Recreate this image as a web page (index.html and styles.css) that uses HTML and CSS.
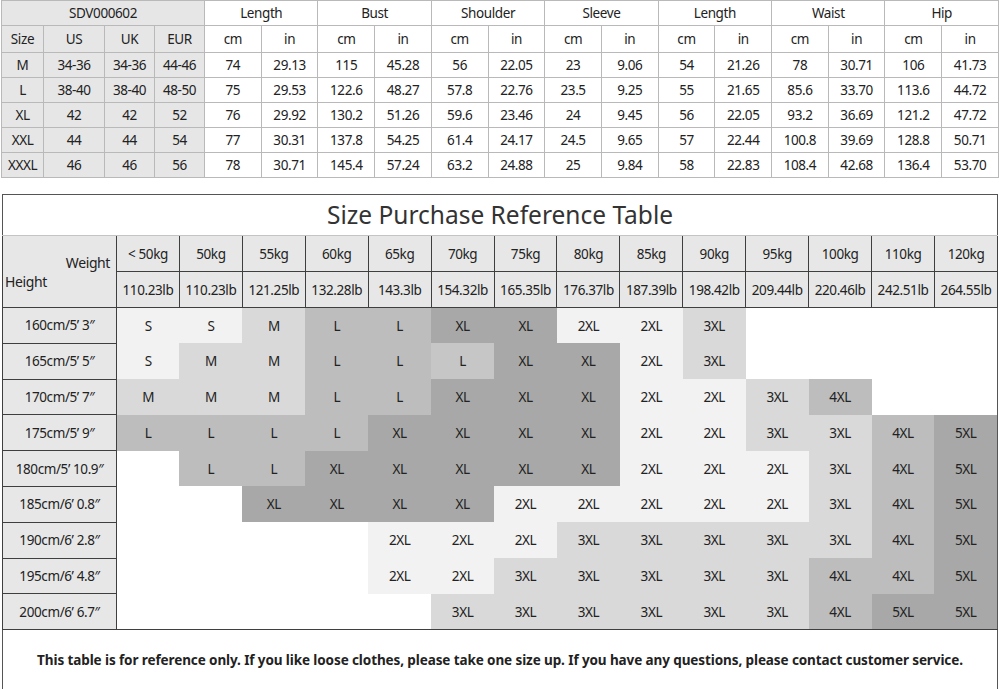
FILE: index.html
```html
<!DOCTYPE html>
<html lang="en">
<head>
<meta charset="utf-8">
<title>SDV000602 Size Chart</title>
<link rel="stylesheet" href="styles.css">
</head>
<body>
<div class="page">
  <table class="spec">
    <colgroup>
      <col class="c-size"><col class="c-us"><col class="c-uk"><col class="c-eur">
      <col><col><col><col><col><col><col><col><col><col><col><col><col><col>
    </colgroup>
    <tr class="r-top">
      <th colspan="4" class="g">SDV000602</th>
      <th colspan="2">Length</th><th colspan="2">Bust</th><th colspan="2">Shoulder</th><th colspan="2">Sleeve</th>
      <th colspan="2">Length</th><th colspan="2">Waist</th><th colspan="2">Hip</th>
    </tr>
    <tr class="r-sub">
      <th class="g">Size</th><th class="g">US</th><th class="g">UK</th><th class="g">EUR</th>
      <th>cm</th><th>in</th><th>cm</th><th>in</th><th>cm</th><th>in</th><th>cm</th><th>in</th>
      <th>cm</th><th>in</th><th>cm</th><th>in</th><th>cm</th><th>in</th>
    </tr>
    <tr><td class="g">M</td><td class="g">34-36</td><td class="g">34-36</td><td class="g">44-46</td><td>74</td><td>29.13</td><td>115</td><td>45.28</td><td>56</td><td>22.05</td><td>23</td><td>9.06</td><td>54</td><td>21.26</td><td>78</td><td>30.71</td><td>106</td><td>41.73</td></tr>
    <tr><td class="g">L</td><td class="g">38-40</td><td class="g">38-40</td><td class="g">48-50</td><td>75</td><td>29.53</td><td>122.6</td><td>48.27</td><td>57.8</td><td>22.76</td><td>23.5</td><td>9.25</td><td>55</td><td>21.65</td><td>85.6</td><td>33.70</td><td>113.6</td><td>44.72</td></tr>
    <tr><td class="g">XL</td><td class="g">42</td><td class="g">42</td><td class="g">52</td><td>76</td><td>29.92</td><td>130.2</td><td>51.26</td><td>59.6</td><td>23.46</td><td>24</td><td>9.45</td><td>56</td><td>22.05</td><td>93.2</td><td>36.69</td><td>121.2</td><td>47.72</td></tr>
    <tr><td class="g">XXL</td><td class="g">44</td><td class="g">44</td><td class="g">54</td><td>77</td><td>30.31</td><td>137.8</td><td>54.25</td><td>61.4</td><td>24.17</td><td>24.5</td><td>9.65</td><td>57</td><td>22.44</td><td>100.8</td><td>39.69</td><td>128.8</td><td>50.71</td></tr>
    <tr><td class="g">XXXL</td><td class="g">46</td><td class="g">46</td><td class="g">56</td><td>78</td><td>30.71</td><td>145.4</td><td>57.24</td><td>63.2</td><td>24.88</td><td>25</td><td>9.84</td><td>58</td><td>22.83</td><td>108.4</td><td>42.68</td><td>136.4</td><td>53.70</td></tr>
  </table>

  <table class="ref">
    <colgroup>
      <col class="c-height">
      <col><col><col><col><col><col><col><col><col><col><col><col><col><col>
    </colgroup>
    <tr class="title"><td colspan="15">Size Purchase Reference Table</td></tr>
    <tr class="hd">
      <th rowspan="2" class="diag"><div class="wt">Weight</div><div class="ht">Height</div></th>
      <th>&lt; 50kg</th><th>50kg</th><th>55kg</th><th>60kg</th><th>65kg</th><th>70kg</th><th>75kg</th>
      <th>80kg</th><th>85kg</th><th>90kg</th><th>95kg</th><th>100kg</th><th>110kg</th><th>120kg</th>
    </tr>
    <tr class="hd">
      <th>110.23lb</th><th>110.23lb</th><th>121.25lb</th><th>132.28lb</th><th>143.3lb</th><th>154.32lb</th><th>165.35lb</th>
      <th>176.37lb</th><th>187.39lb</th><th>198.42lb</th><th>209.44lb</th><th>220.46lb</th><th>242.51lb</th><th>264.55lb</th>
    </tr>
    <tr class="row"><th>160cm/5’ 3″</th><td class="s">S</td><td class="s">S</td><td class="m">M</td><td class="l">L</td><td class="l">L</td><td class="xl">XL</td><td class="xl">XL</td><td class="x2">2XL</td><td class="x2">2XL</td><td class="x3">3XL</td><td></td><td></td><td></td><td></td></tr>
    <tr class="row"><th>165cm/5’ 5″</th><td class="s">S</td><td class="m">M</td><td class="m">M</td><td class="l">L</td><td class="l">L</td><td class="l2">L</td><td class="xl">XL</td><td class="xl">XL</td><td class="x2">2XL</td><td class="x3">3XL</td><td></td><td></td><td></td><td></td></tr>
    <tr class="row"><th>170cm/5’ 7″</th><td class="m">M</td><td class="m">M</td><td class="m">M</td><td class="l">L</td><td class="l">L</td><td class="xl">XL</td><td class="xl">XL</td><td class="xl">XL</td><td class="x2">2XL</td><td class="x2">2XL</td><td class="x3">3XL</td><td class="x4">4XL</td><td></td><td></td></tr>
    <tr class="row"><th>175cm/5’ 9″</th><td class="l">L</td><td class="l">L</td><td class="l">L</td><td class="l">L</td><td class="xl">XL</td><td class="xl">XL</td><td class="xl">XL</td><td class="xl">XL</td><td class="x2">2XL</td><td class="x2">2XL</td><td class="x3">3XL</td><td class="x3">3XL</td><td class="x4">4XL</td><td class="x5">5XL</td></tr>
    <tr class="row"><th>180cm/5’ 10.9″</th><td></td><td class="l">L</td><td class="l">L</td><td class="xl">XL</td><td class="xl">XL</td><td class="xl">XL</td><td class="xl">XL</td><td class="xl">XL</td><td class="x2">2XL</td><td class="x2">2XL</td><td class="x2">2XL</td><td class="x3">3XL</td><td class="x4">4XL</td><td class="x5">5XL</td></tr>
    <tr class="row"><th>185cm/6’ 0.8″</th><td></td><td></td><td class="xl">XL</td><td class="xl">XL</td><td class="xl">XL</td><td class="xl">XL</td><td class="x2">2XL</td><td class="x2">2XL</td><td class="x2">2XL</td><td class="x2">2XL</td><td class="x2">2XL</td><td class="x3">3XL</td><td class="x4">4XL</td><td class="x5">5XL</td></tr>
    <tr class="row"><th>190cm/6’ 2.8″</th><td></td><td></td><td></td><td></td><td class="x2">2XL</td><td class="x2">2XL</td><td class="x2">2XL</td><td class="x3">3XL</td><td class="x3">3XL</td><td class="x3">3XL</td><td class="x3">3XL</td><td class="x3">3XL</td><td class="x4">4XL</td><td class="x5">5XL</td></tr>
    <tr class="row"><th>195cm/6’ 4.8″</th><td></td><td></td><td></td><td></td><td class="x2">2XL</td><td class="x2">2XL</td><td class="x3">3XL</td><td class="x3">3XL</td><td class="x3">3XL</td><td class="x3">3XL</td><td class="x3">3XL</td><td class="x4">4XL</td><td class="x4">4XL</td><td class="x5">5XL</td></tr>
    <tr class="row"><th>200cm/6’ 6.7″</th><td></td><td></td><td></td><td></td><td></td><td class="x3">3XL</td><td class="x3">3XL</td><td class="x3">3XL</td><td class="x3">3XL</td><td class="x3">3XL</td><td class="x3">3XL</td><td class="x4">4XL</td><td class="x5">5XL</td><td class="x5">5XL</td></tr>
    <tr class="foot"><td colspan="15">This table is for reference only. If you like loose clothes, please take one size up. If you have any questions, please contact customer service.</td></tr>
  </table>
</div>
</body>
</html>
```

FILE: styles.css
```css
html, body {
  margin: 0;
  padding: 0;
  background: #ffffff;
}

body {
  font-family: "Noto Sans", "Open Sans", sans-serif;
  color: #222222;
  width: 999px;
  height: 689px;
  overflow: hidden;
}

.page {
  display: flex;
  flex-direction: column;
  gap: 16px;
  padding-left: 1px;
}

table {
  border-collapse: collapse;
  table-layout: fixed;
}

th, td {
  padding: 0;
  font-weight: normal;
  text-align: center;
  white-space: nowrap;
}

/* ---------- spec table ---------- */
.spec {
  width: 998px;
  font-size: 13.5px;
  letter-spacing: -0.4px;
}

.spec .c-size { width: 42px; }
.spec .c-us { width: 61px; }
.spec .c-uk { width: 50px; }
.spec .c-eur { width: 50px; }

.spec th, .spec td {
  border: 1px solid #b9b9b9;
  height: 24px;
  line-height: 16px;
}

.spec .r-top th { height: 24px; }
.spec .r-sub th { height: 26px; }

.spec .g {
  background: #e6e6e6;
}

/* ---------- reference table ---------- */
.ref {
  width: 996px;
  margin-left: 1px;
  border: 1.5px solid #555555;
  font-size: 13.5px;
  letter-spacing: -0.4px;
}

.ref .c-height { width: 114px; }

.ref .title td {
  height: 40px;
  font-size: 24.5px;
  letter-spacing: 0;
  color: #333333;
  border-bottom: 1px solid #c4c4c4;
  line-height: 30px;
}

.ref .hd th {
  height: 35px;
  border: 1px solid #3f3f3f;
  background: #e7e7e7;
}

.ref .diag {
  vertical-align: top;
  background: linear-gradient(to top right, #e7e7e7 calc(50% - 0.7px), #3f3f3f 50%, #e7e7e7 calc(50% + 0.7px));
  font-size: 14px;
}

.ref .diag .wt {
  text-align: right;
  padding: 17px 6px 0 0;
  line-height: 20px;
}

.ref .diag .ht {
  text-align: left;
  padding-left: 2px;
  line-height: 18px;
}

.ref .row th {
  height: 34.8px;
  border: 1px solid #3f3f3f;
  background: #e7e7e7;
}

.ref .row td {
  height: 34.8px;
}

.ref .s, .ref .x2 { background: #f2f2f2; }
.ref .m, .ref .x3 { background: #d9d9d9; }
.ref .l, .ref .x4 { background: #bdbdbd; }
.ref .l2 { background: #c6c6c6; }
.ref .xl, .ref .x5 { background: #a8a8a8; }

.ref .foot td {
  height: 60px;
  border-top: 1px solid #3f3f3f;
  font-weight: bold;
  font-size: 13.5px;
  letter-spacing: -0.1px;
}
```
